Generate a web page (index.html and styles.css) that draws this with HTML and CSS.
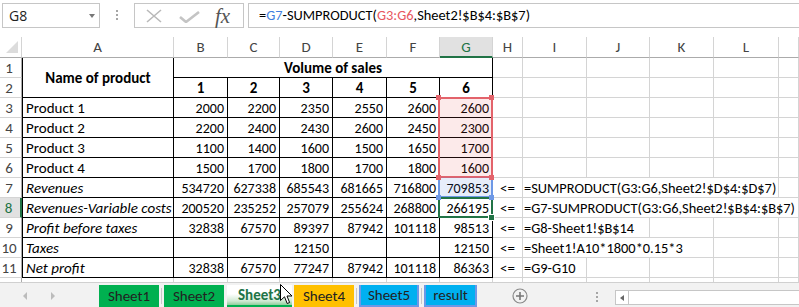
FILE: index.html
```html
<!DOCTYPE html>
<html lang="en">
<head>
    <meta charset="UTF-8">
    <title>Sheet3</title>
    <link rel="stylesheet" href="styles.css">
</head>
<body>
<div class="excel">
    <!-- formula bar -->
    <div class="topbar">
        <div class="namebox"><span>G8</span><span class="dd"></span></div>
        <div class="grip"><i></i><i></i><i></i></div>
        <div class="fxbtns">
            <svg class="ico-x" width="16" height="14" viewBox="0 0 16 14"><path d="M1 1 L15 13 M15 1 L1 13" stroke="#b9b9b9" stroke-width="1.6" fill="none"/></svg>
            <svg class="ico-ok" width="21" height="12" viewBox="0 0 21 12"><path d="M1 6 L7 11 L20 1" stroke="#c4c4c4" stroke-width="2.6" fill="none"/></svg>
            <span class="fx">fx</span>
        </div>
        <div class="formula">=<span class="ref-b">G7</span>-SUMPRODUCT(<span class="ref-r">G3:G6</span>,Sheet2!$B$4:$B$7)</div>
    </div>

    <!-- sheet grid -->
    <div class="grid">
        <div class="corner"><svg width="14" height="14" viewBox="0 0 14 14"><path d="M13 1 L13 13 L1 13 Z" fill="#dcdcdc"/></svg></div>
        <div class="ch">A</div><div class="ch">B</div><div class="ch">C</div><div class="ch">D</div><div class="ch">E</div><div class="ch">F</div><div class="ch sel">G</div><div class="ch">H</div><div class="ch">I</div><div class="ch">J</div><div class="ch">K</div><div class="ch">L</div><div class="ch"></div>

        <div class="rh">1</div>
        <div class="c t A name">Name of product</div>
        <div class="c t vol">Volume of sales</div>
        <div class="c"></div><div class="c"></div><div class="c"></div><div class="c"></div><div class="c"></div><div class="c"></div>

        <div class="rh">2</div>
        <div class="c t bd">1</div><div class="c t bd">2</div><div class="c t bd">3</div><div class="c t bd">4</div><div class="c t bd">5</div><div class="c t bd">6</div>
        <div class="c"></div><div class="c"></div><div class="c"></div><div class="c"></div><div class="c"></div><div class="c"></div>

        <div class="rh">3</div>
        <div class="c t A">Product 1</div>
        <div class="c t n">2000</div><div class="c t n">2200</div><div class="c t n">2350</div><div class="c t n">2550</div><div class="c t n">2600</div><div class="c t n">2600</div>
        <div class="c"></div><div class="c"></div><div class="c"></div><div class="c"></div><div class="c"></div><div class="c"></div>

        <div class="rh">4</div>
        <div class="c t A">Product 2</div>
        <div class="c t n">2200</div><div class="c t n">2400</div><div class="c t n">2430</div><div class="c t n">2600</div><div class="c t n">2450</div><div class="c t n">2300</div>
        <div class="c"></div><div class="c"></div><div class="c"></div><div class="c"></div><div class="c"></div><div class="c"></div>

        <div class="rh">5</div>
        <div class="c t A">Product 3</div>
        <div class="c t n">1100</div><div class="c t n">1400</div><div class="c t n">1600</div><div class="c t n">1500</div><div class="c t n">1650</div><div class="c t n">1700</div>
        <div class="c"></div><div class="c"></div><div class="c"></div><div class="c"></div><div class="c"></div><div class="c"></div>

        <div class="rh">6</div>
        <div class="c t A">Product 4</div>
        <div class="c t n">1500</div><div class="c t n">1700</div><div class="c t n">1800</div><div class="c t n">1700</div><div class="c t n">1800</div><div class="c t n">1600</div>
        <div class="c"></div><div class="c"></div><div class="c"></div><div class="c"></div><div class="c"></div><div class="c"></div>

        <div class="rh">7</div>
        <div class="c t A it">Revenues</div>
        <div class="c t n">534720</div><div class="c t n">627338</div><div class="c t n">685543</div><div class="c t n">681665</div><div class="c t n">716800</div><div class="c t n">709853</div>
        <div class="c lt">&lt;=</div><div class="c fm s4">=SUMPRODUCT(G3:G6,Sheet2!$D$4:$D$7)</div><div class="c"></div>

        <div class="rh sel">8</div>
        <div class="c t A it">Revenues-Variable costs</div>
        <div class="c t n">200520</div><div class="c t n">235252</div><div class="c t n">257079</div><div class="c t n">255624</div><div class="c t n">268800</div><div class="c t n">266195</div>
        <div class="c lt">&lt;=</div><div class="c fm s5">=G7-SUMPRODUCT(G3:G6,Sheet2!$B$4:$B$7)</div>

        <div class="rh">9</div>
        <div class="c t A it">Profit before taxes</div>
        <div class="c t n">32838</div><div class="c t n">67570</div><div class="c t n">89397</div><div class="c t n">87942</div><div class="c t n">101118</div><div class="c t n">98513</div>
        <div class="c lt">&lt;=</div><div class="c fm s2">=G8-Sheet1!$B$14</div><div class="c"></div><div class="c"></div><div class="c"></div>

        <div class="rh">10</div>
        <div class="c t A it">Taxes</div>
        <div class="c t n"></div><div class="c t n"></div><div class="c t n">12150</div><div class="c t n"></div><div class="c t n"></div><div class="c t n">12150</div>
        <div class="c lt">&lt;=</div><div class="c fm s3">=Sheet1!A10*1800*0.15*3</div><div class="c"></div><div class="c"></div>

        <div class="rh">11</div>
        <div class="c t A it">Net profit</div>
        <div class="c t n">32838</div><div class="c t n">67570</div><div class="c t n">77247</div><div class="c t n">87942</div><div class="c t n">101118</div><div class="c t n">86363</div>
        <div class="c lt">&lt;=</div><div class="c fm">=G9-G10</div><div class="c"></div><div class="c"></div><div class="c"></div><div class="c"></div>

        <div class="rh last"></div>
        <div class="c last"></div><div class="c last"></div><div class="c last"></div><div class="c last"></div><div class="c last"></div><div class="c last"></div><div class="c last"></div>
        <div class="c last"></div><div class="c last"></div><div class="c last"></div><div class="c last"></div><div class="c last"></div><div class="c last"></div>

        <!-- selection overlays -->
        <div class="rng red"></div>
        <div class="rng blue"></div>
        <div class="rng active"></div>
        <div class="hd r1"></div><div class="hd r2"></div><div class="hd r3"></div><div class="hd r4"></div>
        <div class="hd b1"></div><div class="hd b2"></div>
        <div class="hd fill"></div>
    </div>

    <!-- sheet tabs -->
    <div class="tabbar">
        <div class="nav"><span class="arr l"></span><span class="arr r"></span></div>
        <div class="tab green">Sheet1</div>
        <div class="sep"></div>
        <div class="tab green">Sheet2</div>
        <div class="tab on">Sheet3</div>
        <div class="tab orange">Sheet4</div>
        <div class="sep"></div>
        <div class="tab blue">Sheet5</div>
        <div class="sep"></div>
        <div class="tab blue res">result</div>
        <div class="add"><svg width="16" height="16" viewBox="0 0 16 16"><circle cx="8" cy="8" r="7" fill="none" stroke="#8a8a8a" stroke-width="1.2"/><path d="M8 4 V12 M4 8 H12" stroke="#777" stroke-width="1.6"/></svg></div>
        <div class="grip2"><i></i><i></i><i></i></div>
        <div class="hscroll"><span class="sbtn"><span class="arr l"></span></span></div>
        <svg class="cursor" width="13" height="21" viewBox="0 0 13 21"><path d="M0.5 0.5 L0.5 16.5 L4.5 12.8 L7.2 19.5 L9.6 18.5 L7 12 L12 12 Z" fill="#fff" stroke="#000" stroke-width="1"/></svg>
    </div>
</div>
</body>
</html>
```

FILE: styles.css
```css
* {
    box-sizing: border-box;
}
body {
    margin: 0;
    background: #fff;
    font-family: "Carlito", "Lato", sans-serif;
    font-size: 15px;
    color: #000;
}
.excel {
    width: 799px;
    height: 307px;
    overflow: hidden;
}

/* formula bar */
.topbar {
    height: 37px;
    display: flex;
    align-items: flex-start;
    padding-top: 3px;
}
.namebox {
    margin-left: 2px;
    width: 98px;
    height: 25px;
    border: 1px solid #c6c6c6;
    display: flex;
    align-items: center;
    justify-content: space-between;
    padding: 0 4px 0 6px;
    font-family: "Open Sans", sans-serif;
    font-size: 14px;
    color: #222;
}
.dd {
    width: 0;
    height: 0;
    border-left: 3.5px solid transparent;
    border-right: 3.5px solid transparent;
    border-top: 4px solid #777;
}
.grip {
    width: 34px;
    height: 25px;
    display: flex;
    flex-direction: column;
    align-items: center;
    gap: 2px;
    padding-top: 7px;
}
.grip i, .grip2 i {
    display: block;
    width: 2px;
    height: 2px;
    background: #a6a6a6;
}
.fxbtns {
    width: 110px;
    height: 25px;
    border: 1px solid #c6c6c6;
    display: flex;
    align-items: center;
}
.ico-x {
    margin-left: 11px;
}
.ico-ok {
    margin-left: 17px;
    margin-top: 2px;
}
.fx {
    margin-left: 15px;
    font-family: "Liberation Serif", serif;
    font-style: italic;
    font-size: 21px;
    color: #555;
    line-height: 20px;
}
.formula {
    margin-left: 4px;
    flex: 1;
    height: 25px;
    border: 1px solid #c6c6c6;
    border-right: 0;
    padding-left: 10px;
    line-height: 23px;
    font-size: 14.4px;
    white-space: nowrap;
}
.ref-b {
    color: #3f7fe0;
}
.ref-r {
    color: #e8585f;
}

/* grid */
.grid {
    position: relative;
    display: grid;
    grid-template-columns: 22px 152px 54px 52px 53px 54px 53px 53px 30px 64px 63px 64px 65px 1fr;
    grid-template-rows: 21px repeat(11, 20px) 4px;
}
.corner {
    border-right: 1px solid #d4d4d4;
    border-bottom: 1px solid #ababab;
    display: flex;
    align-items: flex-end;
    justify-content: flex-end;
    padding: 0 2px 3px 0;
}
.ch {
    border-right: 1px solid #d4d4d4;
    border-bottom: 1px solid #ababab;
    text-align: center;
    line-height: 21px;
    color: #444;
}
.ch.sel {
    background: #e1e1e1;
    color: #217346;
    border-bottom: 2px solid #217346;
}
.rh {
    border-right: 1px solid #ababab;
    border-bottom: 1px solid #d4d4d4;
    text-align: center;
    padding: 1px 3px 0 0;
    line-height: 19px;
    color: #444;
}
.rh.sel {
    background: #e1e1e1;
    color: #217346;
    border-right: 2px solid #217346;
}
.c {
    border-right: 1px solid #d4d4d4;
    border-bottom: 1px solid #d4d4d4;
    padding: 1px 3px 0;
    line-height: 19px;
    white-space: nowrap;
}
.last {
    border-bottom: 0;
}
.t {
    border-right-color: #000;
    border-bottom-color: #000;
}
.A {
    border-left: 1px solid #000;
}
.n {
    text-align: right;
    font-size: 14px;
}
.bd {
    text-align: center;
    font-weight: bold;
}
.it {
    font-style: italic;
}
.name {
    grid-row: span 2;
    display: flex;
    align-items: center;
    justify-content: center;
    font-weight: bold;
}
.vol {
    grid-column: span 6;
    text-align: center;
    font-weight: bold;
}
.lt {
    text-align: center;
    padding-left: 0;
    padding-right: 0;
}
.fm {
    padding-left: 1px;
    font-size: 14.4px;
}
.s2 { grid-column: span 2; }
.s3 { grid-column: span 3; }
.s4 { grid-column: span 4; }
.s5 { grid-column: span 5; }

/* selection ranges */
.rng {
    position: absolute;
    left: 438px;
    width: 55px;
}
.red {
    top: 60px;
    height: 81px;
    border: 2px solid #e3636b;
    background: rgba(232, 80, 80, 0.12);
}
.blue {
    top: 140px;
    height: 21px;
    border: 2px solid #6d98e6;
    border-top: 0;
    background: rgba(66, 114, 214, 0.13);
}
.active {
    top: 160px;
    height: 21px;
    border: 2px solid #217346;
}
.hd {
    position: absolute;
    width: 5px;
    height: 5px;
}
.r1, .r2, .r3, .r4 {
    background: #e3636b;
}
.b1, .b2 {
    background: #6d98e6;
}
.r1 { left: 436px; top: 58px; }
.r2 { left: 489px; top: 58px; }
.r3 { left: 436px; top: 138px; }
.r4 { left: 489px; top: 138px; }
.b1 { left: 436px; top: 158px; }
.b2 { left: 489px; top: 158px; }
.fill {
    left: 489px;
    top: 178px;
    background: #217346;
    box-shadow: 0 0 0 1px #fff;
}

/* sheet tabs */
.tabbar {
    position: relative;
    height: 25px;
    border-top: 1px solid #d0d0d0;
    background: #f2f2f2;
    display: flex;
    align-items: flex-start;
    padding-top: 2px;
}
.nav {
    width: 99px;
    height: 22px;
    display: flex;
    align-items: center;
    padding-left: 23px;
    gap: 24px;
}
.arr {
    width: 0;
    height: 0;
    border-top: 4px solid transparent;
    border-bottom: 4px solid transparent;
}
.arr.l {
    border-right: 4px solid #bcbcbc;
}
.arr.r {
    border-left: 4px solid #bcbcbc;
}
.tab {
    width: 60px;
    height: 22px;
    display: flex;
    align-items: center;
    justify-content: center;
    color: #222;
}
.sep {
    width: 1px;
    height: 16px;
    margin: 3px 2px 0;
    background: #c8c8c8;
}
.green {
    background: #00b050;
}
.orange {
    background: #ffc000;
    margin-left: 2px;
}
.blue.tab {
    background: #00b0f0;
}
.res {
    width: 53px;
}
.tab.on {
    width: 65px;
    margin-left: 3px;
    background: linear-gradient(#fff 45%, #cfe9d2 80%, #8fcf9c);
    color: #217346;
    font-weight: bold;
    border-bottom: 2px solid #00b050;
}
.add {
    margin-left: 35px;
    margin-top: 3px;
    height: 16px;
}
.grip2 {
    margin-left: 68px;
    margin-top: 7px;
    display: flex;
    flex-direction: column;
    gap: 2px;
}
.hscroll {
    margin-left: 17px;
    margin-top: 5px;
    flex: 1;
    height: 15px;
    background: #fff;
    border: 1px solid #c6c6c6;
    border-right: 0;
}
.sbtn {
    display: flex;
    align-items: center;
    justify-content: center;
    width: 13px;
    height: 13px;
    border-right: 1px solid #c6c6c6;
}
.sbtn .arr.l {
    border-right-color: #666;
    border-top-width: 3.5px;
    border-bottom-width: 3.5px;
}
.cursor {
    position: absolute;
    left: 280px;
    top: 1px;
}
```
